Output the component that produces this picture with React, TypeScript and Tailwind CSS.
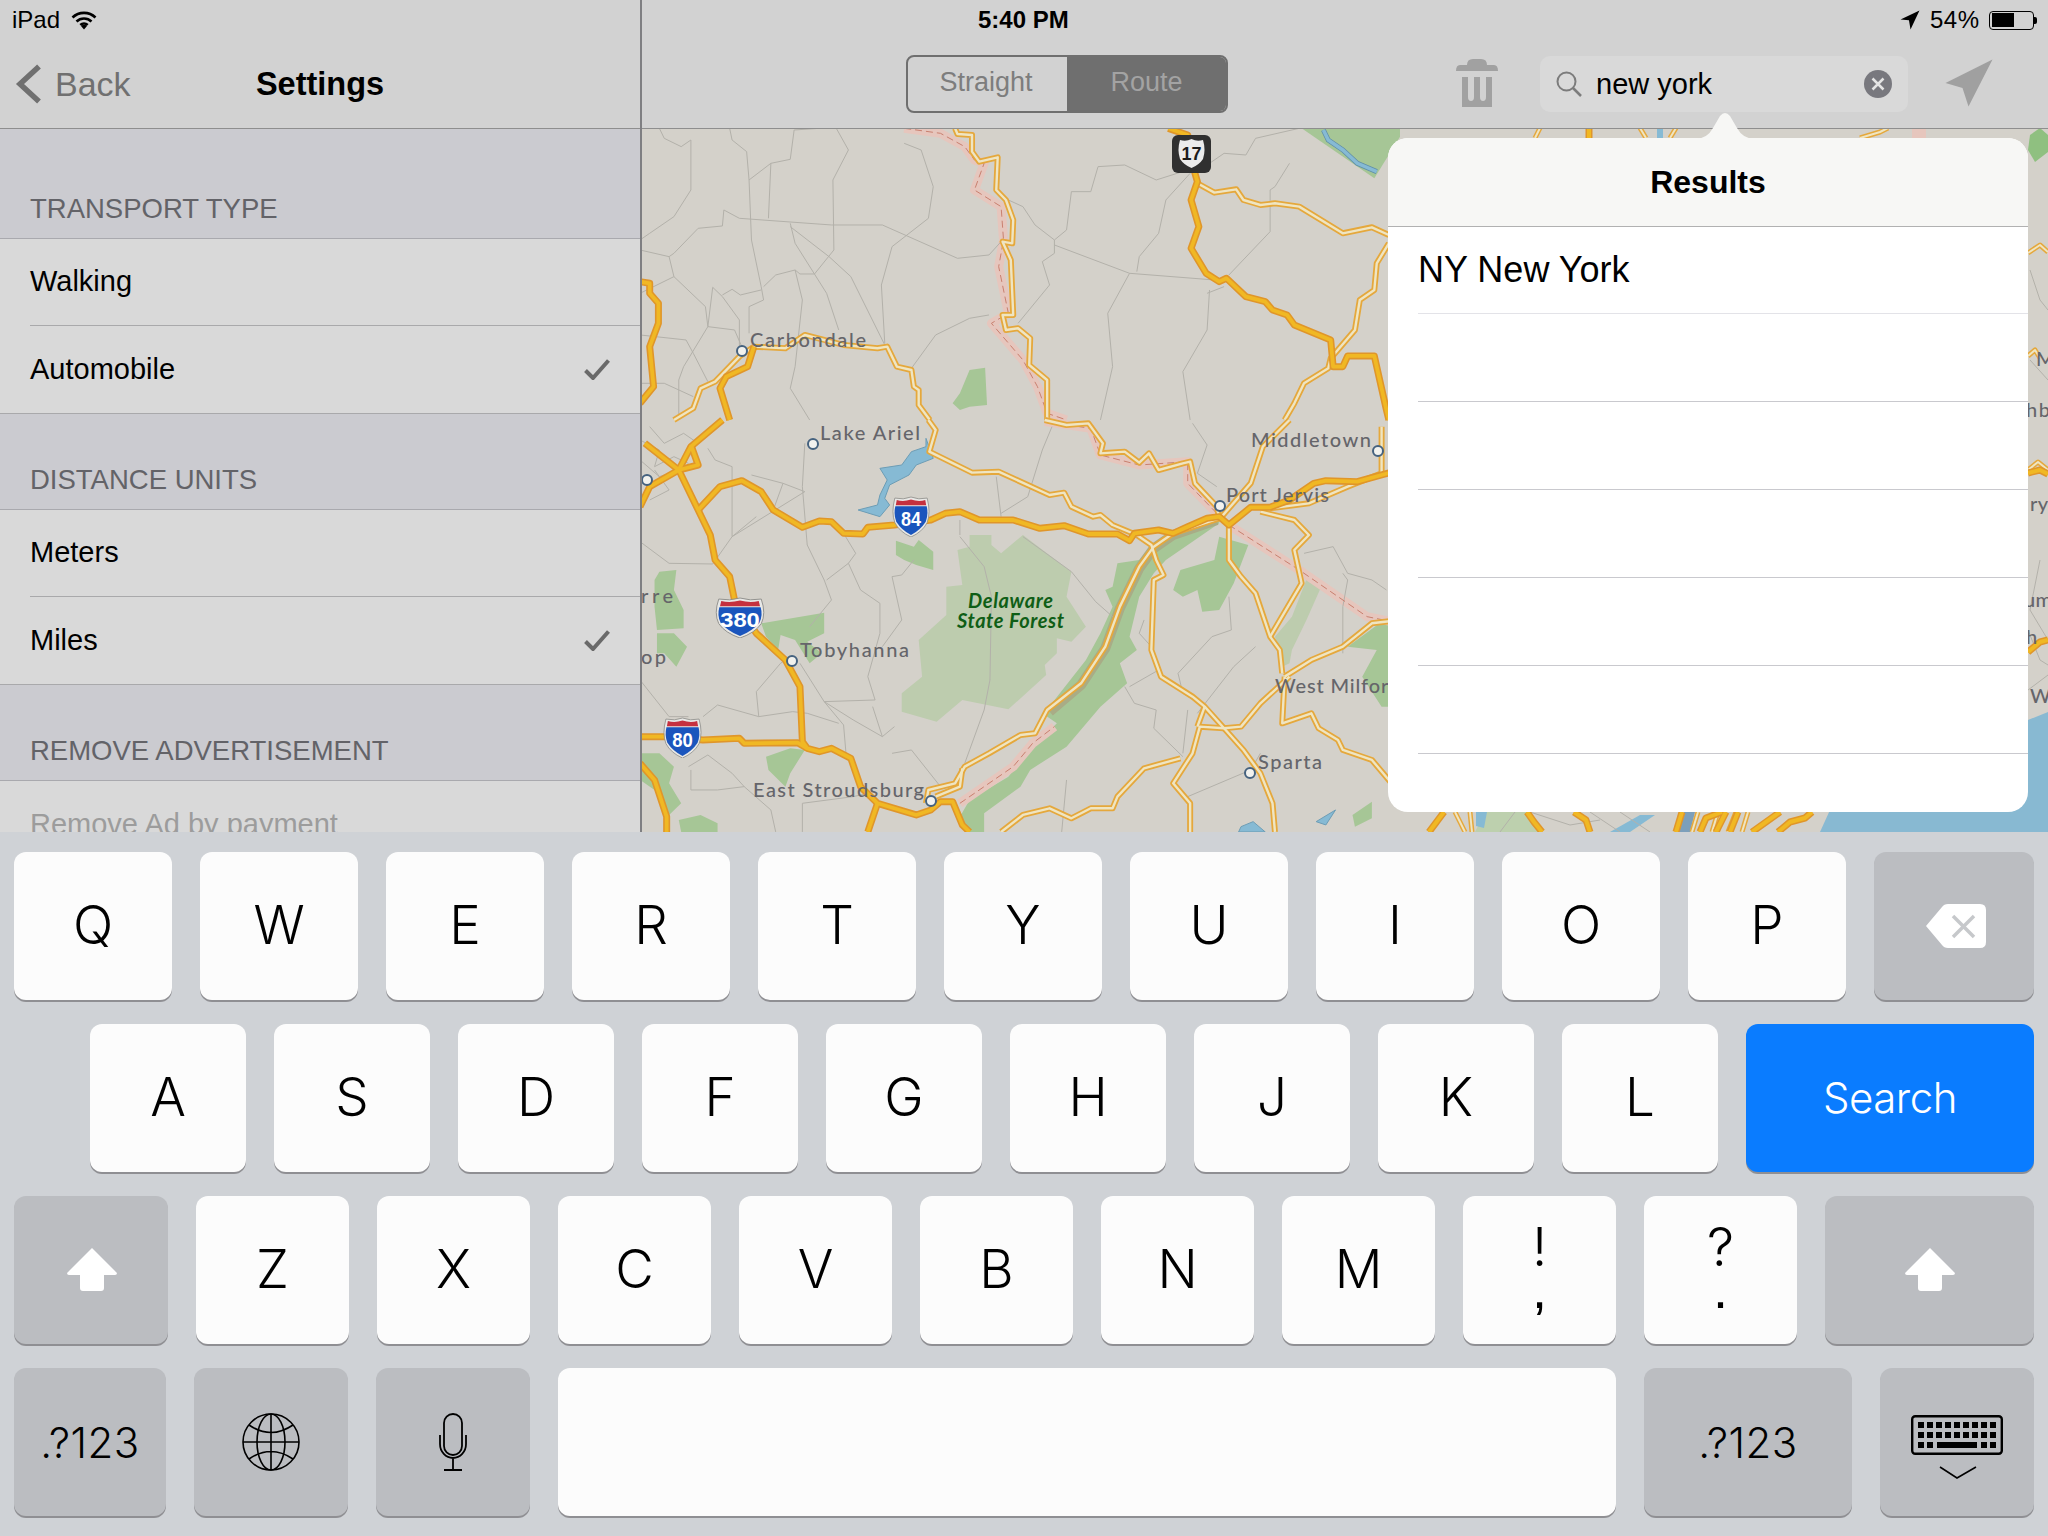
import type { ReactNode } from "react";
import clsx from "clsx";

// all map points are read off the reference crops: x is squeezed, so the groups are rescaled
const mapScale = "scale(0.4847,0.3333)";

const forests = {
  upper: [
    "1365,385 1568,385 1568,410 1515,535",
    "680,1110 712,1103 716,1215 680,1220 660,1230 645,1210 660,1180",
  ],
  lower: [
    "1195,300 1120,320 1070,365 1030,420 985,430 975,500 960,510 975,560 950,640 920,720 850,850 830,880 860,910 800,1000 760,1070 680,1140 660,1190 680,1236 710,1236 710,1180 785,1100 805,1050 880,980 950,860 1005,790 990,730 1025,690 1010,650 1030,530 1060,460 1085,420 1130,375 1195,310",
    "528,362 565,380 575,360 605,395 605,450 570,435 545,420 528,405",
    "1115,450 1185,420 1195,350 1255,375 1225,490 1195,570 1160,575 1150,510 1120,530 1100,510",
    "40,455 75,450 70,510 90,570 90,625 35,630 30,560 30,480",
    "35,640 70,640 97,680 75,740 50,700 35,700",
    "250,610 380,578 380,640 345,665 375,700 350,730 320,660 290,645 285,690 260,650",
    "260,1010 310,985 340,990 310,1060 300,1100 265,1050",
    "0,1000 40,1000 70,1040 60,1090 85,1150 60,1185 30,1110 0,1080",
    "80,1200 125,1185 160,1210 160,1236 85,1236",
    "1460,680 1530,605 1568,620 1568,860 1530,860 1490,770 1520,690",
    "1470,1185 1510,1145 1510,1195 1475,1220",
  ],
};

const paleForests = [
  "680,345 725,345 725,375 745,400 790,345 890,455 880,530 920,620 890,665 860,655 860,700 835,735 838,765 760,868 665,840 612,905 540,875 540,820 582,770 575,660 632,585 632,500 665,495 655,390 680,380",
  "1380,460 1410,485 1375,600 1345,690 1340,730 1325,740 1310,650 1345,590",
];

const lakes = [
  "590,55 605,115 570,135 555,165 515,195 505,235 515,255 495,290 450,270 490,255 495,225 510,180 495,145 540,135 560,95 590,80",
  "1240,1220 1265,1205 1290,1236 1235,1236",
  "1395,1205 1435,1170 1415,1215",
];

const borderBands = {
  upper: [
    "545,385 620,400 670,440 690,480 710,490 690,570 745,620 750,720 740,800 760,940 725,970 790,1080 820,1160 840,1240 880,1260",
  ],
  lower: [
    "835,5 930,25 950,105 1030,135 1130,125 1130,190 1190,280",
    "1215,315 1360,450 1500,590 1568,610",
    "660,1150 770,1040 810,970 855,920",
  ],
};

// the darker strip that follows the river through the ridge
const riverBand = "1190,300 1100,345 1060,385 1030,445 990,565 960,685 910,795 845,875";

const thinRoads = {
  upper: [
    "40,385 50,415 85,440 105,420 105,570 70,650 20,700 0,720",
    "185,385 190,420 220,455 225,540 270,490 310,478 318,390 370,385",
    "225,540 230,720 250,860 255,900 225,920 225,1000",
    "270,490 265,655",
    "173,630 205,655 395,675 500,675 655,775 720,765 745,725",
    "405,385 430,450 398,540 400,750 360,822 330,822 320,810 280,825 255,860",
    "310,670 320,730 385,880 410,990",
    "120,685 170,678 173,630",
    "120,685 70,760 60,770 0,750",
    "70,830 135,920 140,980 195,990 210,1040",
    "60,770 70,830 0,880",
    "150,862 170,890 205,960 205,1040",
    "150,862 140,980 90,1100 80,1140 80,1260",
    "170,885 190,868 207,885 250,870",
    "310,680 390,770 435,830 505,1035",
    "545,430 580,450 605,560 595,655 520,740 498,855 505,1030",
    "320,810 335,900 320,1100 310,1165 350,1260",
    "945,500 1000,495 1065,540 1130,510",
    "945,500 930,575 890,575 880,690 855,720 855,760 830,785 845,855 780,970",
    "760,600 790,620 815,675 855,720",
    "855,735 1010,820 1185,840",
    "1010,820 965,940 975,1100 950,1260",
    "1135,520 1085,600 1070,700 1030,770 1025,815",
    "1300,570 1300,695 1215,825",
    "1175,870 1170,990 1120,1115 1135,1260",
    "1205,860 1170,880",
    "720,945 680,955 610,1005 560,1105",
    "1360,385 1270,415 1250,465 1205,460 1145,520",
    "1340,490 1310,560 1300,570",
    "0,1005 95,1020 110,1060 140,1145",
    "0,1150 50,1150 110,1190",
  ],
  lower: [
    "0,365 60,430 150,432 190,350 240,290",
    "140,85 155,120 190,140 190,350",
    "190,350 340,215 295,190 230,165",
    "295,190 275,270",
    "340,70 335,200 345,375 380,480 395,540 350,620",
    "430,430 385,480",
    "420,340 445,400 430,430 455,510 495,550 495,640 470,770 485,840 380,845 330,730",
    "380,845 440,900 500,950 525,920",
    "380,845 420,915 425,1000",
    "520,470 540,465 565,420",
    "520,470 540,600 500,680",
    "660,300 660,345",
    "735,170 745,290",
    "660,350 710,440 725,530 722,780 710,870 670,1030",
    "790,350 890,455 940,545 975,590",
    "1040,600 1030,640 1055,680",
    "1000,800 1020,850 1065,870 1060,925 1120,1010",
    "1060,730 1070,750 1010,800",
    "1130,870 1120,1000",
    "1165,860 1120,820 1110,760 1180,650 1220,630 1215,530",
    "1270,680 1225,740 1150,880",
    "1340,770 1330,830",
    "1450,460 1460,480 1450,560 1450,700",
    "1370,400 1430,380 1460,460 1510,480 1540,510",
    "1280,1000 1260,1050 1130,1130",
    "0,780 60,890 100,890",
    "130,890 160,855 245,890 315,875 345,880 410,910",
    "240,815 290,730 300,720",
    "240,815 245,890",
    "100,1040 140,1005 190,1060 215,1100 270,1170 280,1236",
    "105,1050 105,1110 160,1110 215,1100",
    "335,1150 440,1130 470,1120",
    "335,1150 335,1236",
    "500,950 480,860",
    "520,1000 560,990 620,1100",
    "850,20 830,90 800,230 745,280",
    "1140,10 1170,75 1150,160 1190,200",
    "880,1080 870,1236",
    "0,60 40,90 30,140 70,110 100,130",
    "20,20 50,70 90,40 120,70",
    "0,120 40,170 80,150",
    "30,150 60,210 20,240",
  ],
};

const minorRoads = {
  upper: [
    "650,385 655,402 685,405 685,455 700,485 738,472 735,570 755,600 770,660 768,730 748,725 765,780 770,945 748,945 755,990 780,985 805,1015 803,1095 840,1140 840,1260",
    "1150,550 1185,578 1230,568 1245,600 1280,615 1310,610 1360,620 1450,700 1510,682 1545,705",
    "1545,730 1520,790 1515,870 1485,900 1475,990 1425,1075 1420,1105 1370,1150 1350,1210 1330,1260",
    "70,1260 110,1225 125,1165 155,1145 205,1070 235,1040 300,1045 340,1005 420,1035 490,1045 510,1040 530,1100 560,1110 565,1160 575,1170 575,1215 598,1260",
  ],
  lower: [
    "595,0 610,30 597,95 685,158 740,155 845,225 875,218 890,260 935,290 950,285 975,315 1025,345 1055,375 1065,420 1080,465 1060,480 1055,690 1075,770 1140,830 1165,860 1205,925 1245,990 1280,1060 1305,1150 1310,1236",
    "835,0 880,15 925,10 955,70 950,100 1000,95 1030,128 1050,100 1070,150 1120,130 1135,125 1145,190 1190,260 1195,295",
    "1195,295 1100,340 1060,380 1030,440 990,560 960,680 910,790 840,870 815,940 785,945 720,1000 670,1040 650,1090 595,1110 590,1150",
    "665,1045 660,1100 610,1130",
    "1215,320 1215,420 1240,470 1270,520 1300,650 1320,690 1325,760",
    "1300,650 1365,490 1350,390 1380,345 1350,300 1280,275",
    "1300,265 1380,250 1460,200 1530,160 1530,20",
    "1200,290 1260,190 1285,80 1340,0",
    "1330,770 1325,910 1385,880 1400,925 1440,960 1450,990 1510,1020 1568,1120",
    "1330,770 1385,720 1450,680 1510,610 1568,600",
    "1340,770 1280,850 1240,920 1205,925 1155,920 1140,1000 1100,1090 1135,1150 1135,1236",
    "1165,860 1150,920",
    "1115,1015 1040,1045 985,1130 975,1165 930,1165 890,1195 845,1165 790,1185 745,1236",
  ],
};

const majorRoads = {
  upper: [
    "1090,385 1130,405 1145,520 1150,545 1137,600 1153,680 1137,745 1168,820 1195,845 1210,835 1250,890 1290,905 1305,930 1335,945 1350,975 1425,1020 1430,1100 1450,1100 1460,1068 1515,1068 1540,1230 1545,1260",
    "0,845 20,850 20,880 38,910 38,970 20,1040 28,1160 0,1210",
    "235,1040 222,1100 178,1130 165,1165 185,1260",
  ],
  lower: [
    "120,270 165,200 210,182 250,215 275,270 335,322 370,303 395,305 420,340 460,342 470,322 525,315 600,300 630,280 660,275 700,300 770,300 825,325 875,317 925,342 985,342 1010,362 1020,340 1070,330 1100,340 1130,320 1170,295 1195,290 1215,315 1260,262 1300,262 1340,240 1390,190 1415,182 1480,185 1530,165 1568,150",
    "10,70 80,150 120,270 145,345 155,420 185,470 195,540 240,640 300,720 330,800 335,965 345,985 370,995 395,985 435,1015 455,1100 490,1150 570,1185 600,1170 620,1145 645,1145 665,1215 680,1236",
    "0,950 50,950 130,960 205,955 215,970 325,968 345,985",
    "0,1030 30,1080 55,1190 55,1236",
    "0,260 20,200 80,150 105,80 170,0",
    "80,150 120,135 105,75",
    "490,1150 470,1236",
  ],
};

// roads in page coordinates: the strips around the results popover
const edgeMajor = [
  "1429,832 1444,812",
  "1527,812 1534,822 1542,832",
  "1574,812 1586,820 1590,832",
  "1676,832 1682,812",
  "1700,832 1706,818 1722,812",
  "1716,832 1726,812",
  "1730,832 1738,812",
  "1752,832 1780,812",
  "1778,832 1790,822 1805,818 1812,812",
  "2028,473 2040,470 2048,474",
  "2028,652 2040,642 2048,640",
  "1589,128 1589,138",
];

const edgeMinor = [
  "1455,812 1465,832",
  "1470,812 1472,832",
  "1692,832 1698,812",
  "1712,832 1718,812",
  "1728,832 1736,812",
  "1742,832 1748,812",
  "2028,253 2040,245 2048,252",
  "2028,356 2035,350 2040,358",
  "2028,470 2038,462 2048,470",
  "1540,128 1535,138",
  "1640,128 1646,138",
  "1676,128 1670,138",
  "1860,138 1880,132 1888,128",
];

const edgeThin = [
  "1500,832 1515,812",
  "1530,812 1570,825 1600,820",
  "1590,812 1620,832",
  "1620,812 1650,832",
  "2030,270 2040,300 2048,310",
  "2030,360 2048,380",
  "2040,560 2030,610 2048,640",
  "2028,630 2040,660 2048,665",
  "2028,690 2048,675",
];

const mapLabels = [
  { text: "Carbondale", x: 750, y: 347, w: 116 },
  { text: "Lake Ariel", x: 820, y: 440, w: 100 },
  { text: "Middletown", x: 1251, y: 447, w: 120 },
  { text: "Port Jervis", x: 1226, y: 502, w: 103 },
  { text: "rre", x: 641, y: 603, w: 32 },
  { text: "op", x: 641, y: 664, w: 25 },
  { text: "Tobyhanna", x: 800, y: 657, w: 109 },
  { text: "East Stroudsburg", x: 753, y: 797, w: 171 },
  { text: "West Milford", x: 1275, y: 693, w: 125 },
  { text: "Sparta", x: 1258, y: 769, w: 64 },
  { text: "M", x: 2036, y: 366, w: 16 },
  { text: "hb", x: 2026, y: 417, w: 24 },
  { text: "ry", x: 2030, y: 511, w: 18 },
  { text: "um", x: 2024, y: 607, w: 28 },
  { text: "h", x: 2026, y: 644, w: 10 },
  { text: "W.", x: 2030, y: 703, w: 24 },
];

const towns = [
  [742, 351],
  [813, 444],
  [647, 480],
  [1378, 451],
  [1220, 506],
  [792, 661],
  [931, 801],
  [1250, 773],
];

function Shield({ x, y, w, label }: { x: number; y: number; w: number; label: string }) {
  return (
    <svg x={x} y={y} width={w} height={41} viewBox="0 0 40 40" preserveAspectRatio="none">
      <path d="M3 2Q12 4 20 1Q28 4 37 2Q41 16 37 26Q32 35 20 40Q8 35 3 26Q-1 16 3 2Z" fill="#e8e8e6" stroke="#8b8b88" strokeWidth="0.8" />
      <path d="M3.500 10H36.500Q38.500 18 35.500 25Q30 33 20 38Q10 33 4.500 25Q1.500 18 3.500 10Z" fill="#1a55bd" />
      <path d="M5 4Q12 6 20 3.500Q28 6 35 4L36 9H4Z" fill="#c5303f" />
      <text x="20" y="29" textAnchor="middle" fill="#fff" fontSize="19" fontWeight="700" fontFamily="Liberation Sans, sans-serif">
        {label}
      </text>
    </svg>
  );
}

function Lines({ points, stroke, width, dash }: { points: string[]; stroke: string; width: number; dash?: string }) {
  return (
    <>
      {points.map((p) => (
        <polyline
          key={p}
          points={p}
          fill="none"
          stroke={stroke}
          strokeWidth={width}
          strokeDasharray={dash}
          strokeLinejoin="round"
          vectorEffect="non-scaling-stroke"
        />
      ))}
    </>
  );
}

function Shapes({ points, fill, stroke }: { points: string[]; fill: string; stroke?: string }) {
  return (
    <>
      {points.map((p) => (
        <polygon key={p} points={p} fill={fill} stroke={stroke} strokeWidth="1" vectorEffect="non-scaling-stroke" />
      ))}
    </>
  );
}

function MapLayers({ layer }: { layer: "upper" | "lower" }) {
  return (
    <>
      <Shapes points={forests[layer]} fill="#a6c696" />
      {layer === "lower" && <Shapes points={paleForests} fill="#bdccae" />}
      {layer === "lower" && <Shapes points={lakes} fill="#86bad4" stroke="#6d9db5" />}
      {layer === "lower" && <Lines points={[riverBand]} stroke="#a9ac86" width={10} />}
      <Lines points={borderBands[layer]} stroke="#e6c6bd" width={9} />
      <Lines points={thinRoads[layer]} stroke="#b3b1aa" width={1} />
      <Lines points={borderBands[layer]} stroke="#c9806f" width={1} dash="7 4" />
      <Lines points={minorRoads[layer]} stroke="#e5a83c" width={6} />
      <Lines points={minorRoads[layer]} stroke="#efe5c2" width={2.4} />
      <Lines points={majorRoads[layer]} stroke="#e0962a" width={7} />
      <Lines points={majorRoads[layer]} stroke="#f0b824" width={3.8} />
    </>
  );
}

function MapArt() {
  return (
    <svg className="absolute inset-0 h-full w-full" viewBox="642 0 1406 832" preserveAspectRatio="none">
      <rect x="642" y="0" width="1406" height="832" fill="#d4d1ca" />
      <polygon points="1820,832 1830,810 2028,720 2048,712 2048,832" fill="#88b9d2" />
      <polygon points="2030,135 2040,128 2048,135 2048,152 2035,162 2028,150" fill="#8fc080" />
      <polygon points="1475,832 1485,812 1530,812 1540,832" fill="#bdd0ae" />
      <polygon points="1678,832 1684,812 1695,812 1690,832" fill="#7c9fbb" />
      <polygon points="1476,812 1487,812 1484,828 1476,826" fill="#86bad4" />
      <polygon points="1610,832 1640,815 1655,815 1630,832" fill="#86bad4" />

      <g transform={`translate(640,0) ${mapScale}`}>
        <MapLayers layer="upper" />
        <polyline points="1410,390 1420,420 1450,450 1480,490 1520,515" fill="none" stroke="#5f8ea8" strokeWidth={5} vectorEffect="non-scaling-stroke" />
        <polyline points="1410,390 1420,420 1450,450 1480,490 1520,515" fill="none" stroke="#86bad4" strokeWidth={3.5} vectorEffect="non-scaling-stroke" />
      </g>
      <g transform={`translate(640,420) ${mapScale}`}>
        <MapLayers layer="lower" />
      </g>

      <Lines points={edgeThin} stroke="#b3b1aa" width={1} />
      <Lines points={edgeMinor} stroke="#e5a83c" width={5} />
      <Lines points={edgeMinor} stroke="#efe5c2" width={2} />
      <Lines points={edgeMajor} stroke="#e0962a" width={7} />
      <Lines points={edgeMajor} stroke="#f0b824" width={4} />

      {mapLabels.map((l) => (
        <text
          key={l.text}
          x={l.x}
          y={l.y}
          fill="#65656a"
          fontSize="20"
          fontWeight="500"
          fontFamily="Lato, sans-serif"
          textLength={l.w}
          lengthAdjust="spacing"
        >
          {l.text}
        </text>
      ))}
      <text x="1580" y="848" fill="#333" fontSize="22" fontFamily="Lato, sans-serif">
        Yonkers
      </text>
      <g fill="#0f5e16" fontSize="20" fontWeight="700" fontStyle="italic" fontFamily="Lato, sans-serif">
        <text x="968" y="608" textLength="85">Delaware</text>
        <text x="957" y="628" textLength="107">State Forest</text>
      </g>

      {towns.map(([x, y]) => (
        <circle key={x} cx={x} cy={y} r="5" fill="#f2f2ee" stroke="#45627f" strokeWidth="2" />
      ))}

      <Shield x={892} y={496} w={38} label="84" />
      <Shield x={715} y={597} w={50} label="380" />
      <Shield x={663} y={717} w={39} label="80" />

      <rect x="1172" y="135" width="39" height="38" rx="6" fill="#303030" />
      <path d="M1180 140Q1186 142 1191.500 139Q1197 142 1203 140Q1206 150 1203 159Q1199 165 1191.500 168Q1184 165 1180 159Q1177 150 1180 140Z" fill="#ececec" />
      <text x="1191.500" y="160" textAnchor="middle" fontSize="18" fontWeight="700" fill="#1c1c1c" fontFamily="Liberation Sans, sans-serif">
        17
      </text>

      <polygon points="1657,128 1663,128 1663,138 1657,138" fill="#86bad4" />
      <polygon points="1912,128 1926,128 1926,138 1912,138" fill="#e6c6bd" />
    </svg>
  );
}

function Wifi() {
  return (
    <svg width="26" height="19" viewBox="0 0 26 19" fill="none" stroke="#000" strokeWidth="2.600">
      <path d="M1.500 6.500a16.500 16.500 0 0 1 23 0" />
      <path d="M5.500 10.500a10.800 10.800 0 0 1 15 0" />
      <path d="M9.300 14a5.500 5.500 0 0 1 7.400 0" />
      <path d="M13 18.500l-3-3.500a4.500 4.500 0 0 1 6 0z" fill="#000" stroke="none" />
    </svg>
  );
}

function SettingsRow({ label, checked, last, muted }: { label: string; checked?: boolean; last?: boolean; muted?: boolean }) {
  return (
    <div className={clsx("h-[87px] shrink-0 pl-[30px] text-[29px]", muted ? "text-[#9c9c9c]" : "text-black")}>
      <div className={clsx("flex h-full items-center pr-[30px]", !last && "border-b border-[#a9a9ab]")}>
        <span className="flex-1">{label}</span>
        {checked && (
          <svg width="26" height="21" viewBox="0 0 26 21" fill="none" stroke="#6a6a6a" strokeWidth="4">
            <path d="M1.500 11.500l7.500 7.500L24.500 1.500" />
          </svg>
        )}
      </div>
    </div>
  );
}

function SettingsSection({ title, tall, children }: { title: string; tall?: boolean; children?: ReactNode }) {
  return (
    <>
      <div
        className={clsx(
          "flex shrink-0 items-end border-b border-[#a9a9ae] bg-[#cbcbd0] pb-[14px] pl-[30px] text-[27.5px] leading-[30px] text-[#636368]",
          tall ? "h-[110px]" : "h-[96px]"
        )}
      >
        {title}
      </div>
      <div className="bg-[#d9d9d9]">{children}</div>
    </>
  );
}

function Sidebar() {
  return (
    <aside className="flex h-[832px] w-[642px] shrink-0 flex-col overflow-hidden border-r-2 border-[#7f7f82] bg-[#cbcbd0]">
      <header className="h-[129px] shrink-0 border-b border-[#8e8e8e] bg-[#d2d2d2]">
        <div className="flex h-[40px] items-center gap-[11px] pl-[12px] text-[24px] text-black">
          <span>iPad</span>
          <Wifi />
        </div>
        <div className="grid h-[88px] grid-cols-[1fr_auto_1fr] items-center">
          <div className="flex items-center gap-[14px] pl-[15px] text-[34px] text-[#707070]">
            <svg width="26" height="40" viewBox="0 0 26 40" fill="none" stroke="#707070" strokeWidth="5.500">
              <path d="M24 2.500L5 20l19 17.500" />
            </svg>
            <span>Back</span>
          </div>
          <h1 className="text-[32.5px] font-bold text-black">Settings</h1>
          <div />
        </div>
      </header>
      <SettingsSection title="TRANSPORT TYPE" tall>
        <SettingsRow label="Walking" />
        <div className="border-b border-[#a9a9ab]">
          <SettingsRow label="Automobile" checked last />
        </div>
      </SettingsSection>
      <SettingsSection title="DISTANCE UNITS">
        <SettingsRow label="Meters" />
        <div className="border-b border-[#a9a9ab]">
          <SettingsRow label="Miles" checked last />
        </div>
      </SettingsSection>
      <SettingsSection title="REMOVE ADVERTISEMENT">
        <SettingsRow label="Remove Ad by payment" muted last />
      </SettingsSection>
    </aside>
  );
}

function Toolbar() {
  return (
    <div className="relative h-[129px] border-b border-[#8e8e8e] bg-[#d2d2d2]">
      <div className="flex h-[40px] items-center pl-[336px] pr-[11px] text-[24px] text-black">
        <span className="font-bold">5:40 PM</span>
        <svg className="ml-auto" width="20" height="20" viewBox="0 0 19 19" fill="#000">
          <path d="M18.500 0.500L0.500 9l8 .8 1.500 8.700z" />
        </svg>
        <span className="ml-[10px] w-[50px] tracking-[0.5px]">54%</span>
        <span className="ml-[9px] flex h-[19px] w-[45px] items-center rounded-[4px] border border-black p-[1.5px]">
          <span className="h-full w-[22px] bg-black" />
        </span>
        <span className="h-[7px] w-[3px] rounded-r-[2px] bg-black" />
      </div>
      <div className="flex h-[88px] items-center pl-[264px]">
        <div className="flex h-[58px] w-[322px] overflow-hidden rounded-[8px] border-2 border-[#6f6f6f] text-[27px]">
          <div className="flex w-[159px] items-center justify-center pb-[4px] pr-[3px] text-[#7d7d7d]">Straight</div>
          <div className="flex flex-1 items-center justify-center bg-[#6f6f6f] pb-[4px] text-[#a3a3a3]">Route</div>
        </div>
        <svg className="mb-[2px] ml-[228px]" width="42" height="48" viewBox="0 0 42 48" fill="#a1a1a1">
          <path d="M11 6Q11 0 17 0H25Q31 0 31 6H38Q42 6 42 12H0Q0 6 4 6Z" />
          <path d="M6 18H36V48H6ZM12 18V38Q12 42 15 42T18 38V18ZM24 18V38Q24 42 27 42T30 38V18Z" fillRule="evenodd" />
        </svg>
        <div className="ml-[42px] flex h-[56px] w-[368px] items-center rounded-[10px] bg-[#d9d9d9] pl-[16px] pr-[16px]">
          <svg width="26" height="26" viewBox="0 0 26 26" fill="none" stroke="#7c7c7c" strokeWidth="2">
            <circle cx="10.500" cy="10.500" r="9" />
            <path d="M17 17l8 8" strokeWidth="2.500" />
          </svg>
          <span className="ml-[14px] flex-1 pt-[2px] text-[29px] text-black">new york</span>
          <span className="flex h-[28px] w-[28px] items-center justify-center rounded-full bg-[#78787e]">
            <svg width="14" height="14" viewBox="0 0 14 14" stroke="#e4e4e4" strokeWidth="2.500">
              <path d="M1.500 1.500l11 11M12.500 1.500l-11 11" />
            </svg>
          </span>
        </div>
        <svg className="mb-[2px] ml-[37px]" width="48" height="48" viewBox="0 0 48 48" fill="#a0a0a0">
          <path d="M47.500 0.500L0.500 24l17 5 6 18.500z" />
        </svg>
      </div>
    </div>
  );
}

function ResultsPopover() {
  return (
    <div className="absolute left-[746px] top-[138px] h-[674px] w-[640px] rounded-[20px] bg-white">
      <svg className="absolute left-[307px] top-[-26px]" width="60" height="27" viewBox="0 0 60 27" fill="#f7f7f5">
        <path d="M0 27Q12 27 18 16L25 4Q30-2 35 4L42 16Q48 27 60 27Z" />
      </svg>
      <div className="flex h-[89px] items-center justify-center rounded-t-[20px] border-b border-[#b1b1b1] bg-[#f7f7f5] text-[32px] font-bold text-black">
        Results
      </div>
      <div className="flex h-[87px] items-center">
        <div className="ml-[30px] flex h-full flex-1 items-center border-b border-[#e3e3e8] text-[36px] text-black">NY New York</div>
      </div>
      {[1, 2, 3, 4, 5].map((n) => (
        <div key={n} className="ml-[30px] h-[88px] border-b border-[#c9c9ce]" />
      ))}
    </div>
  );
}

const keyShape = "flex h-[148px] shrink-0 items-center justify-center rounded-[12px] shadow-[0_2px_0_#8f8f93]";
const letterKey = clsx(keyShape, "bg-[#fcfcfc] font-['Inter',sans-serif] text-[53px] font-light text-black");
const grayKey = clsx(keyShape, "bg-[#bbbdc1]");
const symbolLabel = "font-['Inter',sans-serif] text-[42px] font-light tracking-[0.5px] text-black";

function ShiftIcon() {
  return (
    <svg width="50" height="43" viewBox="0 0 50 43" fill="#fff">
      <path d="M25 0L50 25Q50 27 48 27H37V40Q37 43 34 43H16Q13 43 13 40V27H2Q0 27 0 25Z" />
    </svg>
  );
}

function PunctKey({ top, bottom }: { top: string; bottom: string }) {
  return (
    <div className={clsx(letterKey, "w-[153px] flex-col pb-[4px] text-[54px] leading-[42px]")}>
      <span>{top}</span>
      <span className="font-['Liberation_Sans',sans-serif] font-normal">{bottom}</span>
    </div>
  );
}

function Keyboard() {
  return (
    <div className="flex h-[704px] flex-col gap-[24px] bg-[#cfd2d6] px-[14px] pt-[20px]">
      <div className="flex gap-[28px]">
        {"QWERTYUIOP".split("").map((k) => (
          <div key={k} className={clsx(letterKey, "w-[158px]")}>
            {k}
          </div>
        ))}
        <div className={clsx(grayKey, "w-[160px] pl-[4px]")}>
          <svg width="60" height="44" viewBox="0 0 60 44">
            <path d="M0 22L16 3Q18 0 22 0H54Q60 0 60 6V38Q60 44 54 44H22Q18 44 16 41Z" fill="#fff" />
            <path d="M27 12L48 33M48 12L27 33" stroke="#c6c8cb" strokeWidth="3.500" />
          </svg>
        </div>
      </div>
      <div className="flex gap-[28px] pl-[76px]">
        {"ASDFGHJKL".split("").map((k) => (
          <div key={k} className={clsx(letterKey, "w-[156px]")}>
            {k}
          </div>
        ))}
        <div className={clsx(keyShape, "w-[288px] bg-[#0a7cff] pb-[2px] font-['Inter',sans-serif] text-[42px] font-light tracking-[-0.5px] text-white")}>
          Search
        </div>
      </div>
      <div className="flex gap-[28px]">
        <div className={clsx(grayKey, "w-[154px] pb-[2px] pl-[2px]")}>
          <ShiftIcon />
        </div>
        {"ZXCVBNM".split("").map((k) => (
          <div key={k} className={clsx(letterKey, "w-[153px]")}>
            {k}
          </div>
        ))}
        <PunctKey top="!" bottom="," />
        <PunctKey top="?" bottom="." />
        <div className={clsx(grayKey, "w-[209px] pb-[2px]")}>
          <ShiftIcon />
        </div>
      </div>
      <div className="flex gap-[28px]">
        <div className={clsx(grayKey, "w-[152px]", symbolLabel)}>.?123</div>
        <div className={clsx(grayKey, "w-[154px]")}>
          <svg width="60" height="60" viewBox="0 0 60 60" fill="none" stroke="#000" strokeWidth="1.600">
            <circle cx="30" cy="30" r="28" />
            <ellipse cx="30" cy="30" rx="14" ry="28" />
            <path d="M30 2V58M2 30H58M8 13Q30 28 52 13M8 47Q30 32 52 47" />
          </svg>
        </div>
        <div className={clsx(grayKey, "w-[154px]")}>
          <svg width="28" height="60" viewBox="0 0 28 60" fill="none" stroke="#000" strokeWidth="1.800">
            <rect x="5" y="2" width="18" height="41" rx="9" />
            <path d="M1 23V32A13 14 0 0 0 27 32V23M14 46V58M5 58H23" />
          </svg>
        </div>
        <div className={clsx(keyShape, "w-[1058px] bg-[#fcfcfc]")} />
        <div className={clsx(grayKey, "w-[208px]", symbolLabel)}>.?123</div>
        <div className={clsx(grayKey, "w-[154px] flex-col pt-[12px]")}>
          <svg width="92" height="66" viewBox="0 0 92 66">
            <rect x="1.200" y="1.200" width="89.600" height="37.600" rx="3" fill="none" stroke="#000" strokeWidth="2.400" />
            {[7, 17, 27].map((y) =>
              [7, 16, 25, 34, 43, 52, 61, 70, 79].map((x) =>
                y === 27 && x > 20 && x < 66 ? null : <rect key={`${x}-${y}`} x={x} y={y} width="6" height="6" />
              )
            )}
            <rect x="26" y="27" width="40" height="6" />
            <path d="M29 52L46 63L65 52" fill="none" stroke="#000" strokeWidth="1.600" />
          </svg>
        </div>
      </div>
    </div>
  );
}

export default function App() {
  return (
    <div className="h-[1536px] w-[2048px] overflow-hidden font-['Liberation_Sans',sans-serif]">
      <div className="flex h-[832px]">
        <Sidebar />
        <main className="relative min-w-0 flex-1 overflow-hidden">
          <MapArt />
          <Toolbar />
          <ResultsPopover />
        </main>
      </div>
      <Keyboard />
    </div>
  );
}
